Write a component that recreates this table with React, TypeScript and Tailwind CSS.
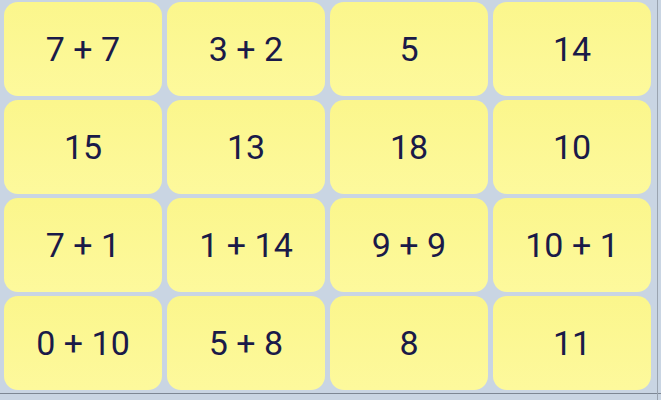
import React from "react";

const items = [
  "7 + 7", "3 + 2", "5", "14",
  "15", "13", "18", "10",
  "7 + 1", "1 + 14", "9 + 9", "10 + 1",
  "0 + 10", "5 + 8", "8", "11",
];

export default function App() {
  return (
    <div className="relative w-[661px] h-[400px] overflow-hidden bg-[#c9d5e3]" style={{ fontFamily: "Roboto, 'Noto Sans', sans-serif" }}>
      <div className="grid grid-cols-[repeat(4,158px)] grid-rows-[repeat(4,94px)] gap-x-[5px] gap-y-[4px] pl-[4px] pt-[2px]">
        {items.map((t, i) => (
          <div
            key={i}
            className="flex items-center justify-center rounded-[14px] bg-gradient-to-b from-[#fbf68c] to-[#fdf99c] text-[34px] text-[#1a1a48] leading-none"
          >
            {t}
          </div>
        ))}
      </div>
      <div className="absolute left-0 right-0 top-[393px] h-[1px] bg-[#7d8794]" />
      <div className="absolute top-0 bottom-0 left-[657px] w-[1px] bg-[#9aa4b0]" />
    </div>
  );
}
